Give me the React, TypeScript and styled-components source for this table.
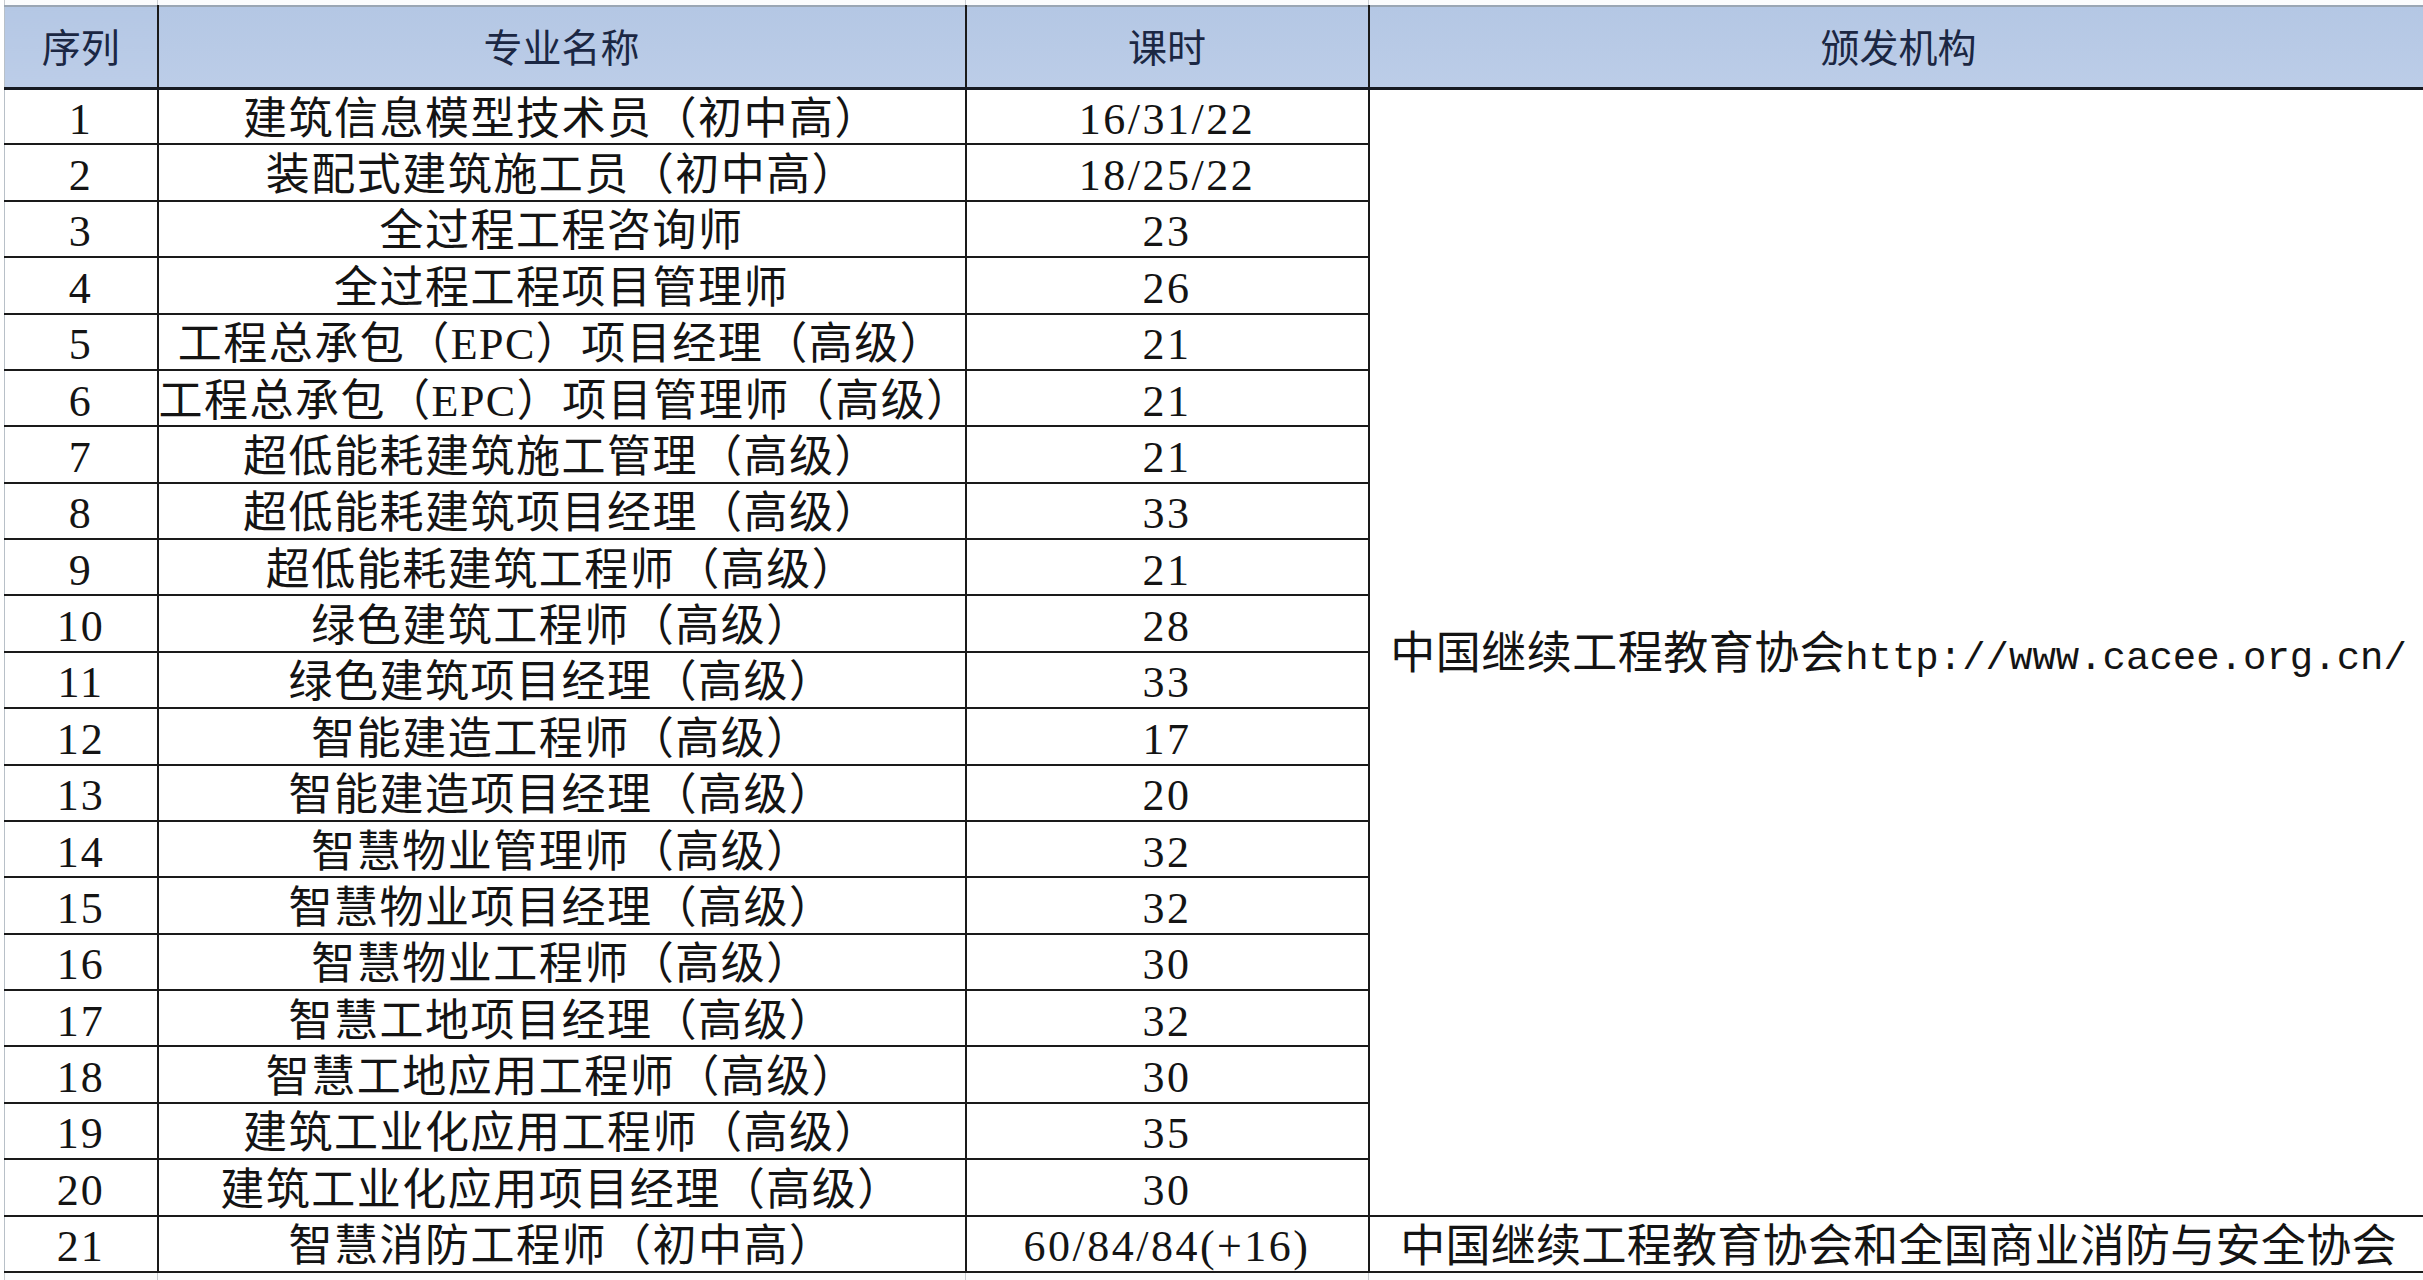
import React from 'react';
import styled, { createGlobalStyle } from 'styled-components';

const GlobalStyle = createGlobalStyle`
    html, body {
        margin: 0;
        padding: 0;
        background: #ffffff;
        overflow: hidden;
    }
`;

interface IRow {
    no: number;
    name: string;
    hours: string;
};

const rows: IRow[] = [
    { no: 1, name: '建筑信息模型技术员（初中高）', hours: '16/31/22' },
    { no: 2, name: '装配式建筑施工员（初中高）', hours: '18/25/22' },
    { no: 3, name: '全过程工程咨询师', hours: '23' },
    { no: 4, name: '全过程工程项目管理师', hours: '26' },
    { no: 5, name: '工程总承包（EPC）项目经理（高级）', hours: '21' },
    { no: 6, name: '工程总承包（EPC）项目管理师（高级）', hours: '21' },
    { no: 7, name: '超低能耗建筑施工管理（高级）', hours: '21' },
    { no: 8, name: '超低能耗建筑项目经理（高级）', hours: '33' },
    { no: 9, name: '超低能耗建筑工程师（高级）', hours: '21' },
    { no: 10, name: '绿色建筑工程师（高级）', hours: '28' },
    { no: 11, name: '绿色建筑项目经理（高级）', hours: '33' },
    { no: 12, name: '智能建造工程师（高级）', hours: '17' },
    { no: 13, name: '智能建造项目经理（高级）', hours: '20' },
    { no: 14, name: '智慧物业管理师（高级）', hours: '32' },
    { no: 15, name: '智慧物业项目经理（高级）', hours: '32' },
    { no: 16, name: '智慧物业工程师（高级）', hours: '30' },
    { no: 17, name: '智慧工地项目经理（高级）', hours: '32' },
    { no: 18, name: '智慧工地应用工程师（高级）', hours: '30' },
    { no: 19, name: '建筑工业化应用工程师（高级）', hours: '35' },
    { no: 20, name: '建筑工业化应用项目经理（高级）', hours: '30' },
];

const Sheet = styled.div`
    padding-left: 4px;
    width: 2423px;
    height: 1280px;
    overflow: hidden;
    box-sizing: border-box;
`;

const Table = styled.table`
    border-collapse: collapse;
    table-layout: fixed;
    width: 2424px;
    font-family: "Liberation Serif", "Noto Sans CJK SC", serif;
    color: #141414;
`;

// spreadsheet rows that are cut by the screenshot edge
const StubRow = styled.tr<{ $h: number }>`
    height: ${(p) => p.$h}px;
`;

const StubCell = styled.td<{ $dark?: boolean }>`
    padding: 0;
    border-left: 1px solid ${(p) => (p.$dark ? '#333' : '#c8ccd0')};
    border-right: 1px solid #c8ccd0;
    background: #fbfcfd;
`;

const HeadRow = styled.tr`
    height: 82px;
`;

const HeadCell = styled.th`
    padding: 0 0 4px;
    background: linear-gradient(#b4c7e4, #bccde8);
    border-top: 2px solid #9aa6b4;
    border-bottom: 3px solid #161a22;
    border-left: 2px solid #1a1a1a;
    border-right: 2px solid #1a1a1a;
    font-family: "Noto Sans CJK SC", sans-serif;
    font-weight: 400;
    font-size: 39px;
    color: #1b2743;
    text-align: center;
    vertical-align: middle;
    white-space: nowrap;
    &:first-child {
        border-left: 1px solid #b8c0c8;
    }
`;

const BodyRow = styled.tr`
    height: 56.38px;
`;

const Cell = styled.td<{ $size?: number; $spacing?: number }>`
    padding: 7px 0 0;
    border: 2px solid #1a1a1a;
    font-size: ${(p) => p.$size || 44}px;
    letter-spacing: ${(p) => (p.$spacing === undefined ? 1.5 : p.$spacing)}px;
    line-height: 1;
    text-align: center;
    vertical-align: middle;
    white-space: nowrap;
    overflow: visible;
    &:first-child {
        border-left: 1px solid #b8c0c8;
    }
`;

const Url = styled.span`
    font-family: "Liberation Mono", monospace;
    font-size: 39px;
    letter-spacing: 0;
`;

export default function App() {
    return (
        <>
            <GlobalStyle />
            <Sheet>
                <Table>
                    <colgroup>
                        <col style={{ width: 153 }} />
                        <col style={{ width: 808 }} />
                        <col style={{ width: 403 }} />
                        <col style={{ width: 1060 }} />
                    </colgroup>
                    <tbody>
                        <StubRow $h={6}>
                            <StubCell />
                            <StubCell $dark />
                            <StubCell />
                            <StubCell />
                        </StubRow>
                        <HeadRow>
                            <HeadCell>序列</HeadCell>
                            <HeadCell>专业名称</HeadCell>
                            <HeadCell>课时</HeadCell>
                            <HeadCell>颁发机构</HeadCell>
                        </HeadRow>
                        {rows.map((r, i) => (
                            <BodyRow key={r.no}>
                                <Cell $spacing={2}>{r.no}</Cell>
                                <Cell>{r.name}</Cell>
                                <Cell $spacing={2.5}>{r.hours}</Cell>
                                {i === 0 && (
                                    <Cell rowSpan={rows.length} $size={45} $spacing={0.5}>
                                        中国继续工程教育协会<Url>http://www.cacee.org.cn/</Url>
                                    </Cell>
                                )}
                            </BodyRow>
                        ))}
                        <BodyRow>
                            <Cell $spacing={2}>21</Cell>
                            <Cell>智慧消防工程师（初中高）</Cell>
                            <Cell $spacing={2.5}>60/84/84(+16)</Cell>
                            <Cell $size={45} $spacing={0.3}>中国继续工程教育协会和全国商业消防与安全协会</Cell>
                        </BodyRow>
                        <StubRow $h={20}>
                            <StubCell />
                            <StubCell />
                            <StubCell />
                            <StubCell />
                        </StubRow>
                    </tbody>
                </Table>
            </Sheet>
        </>
    );
}
